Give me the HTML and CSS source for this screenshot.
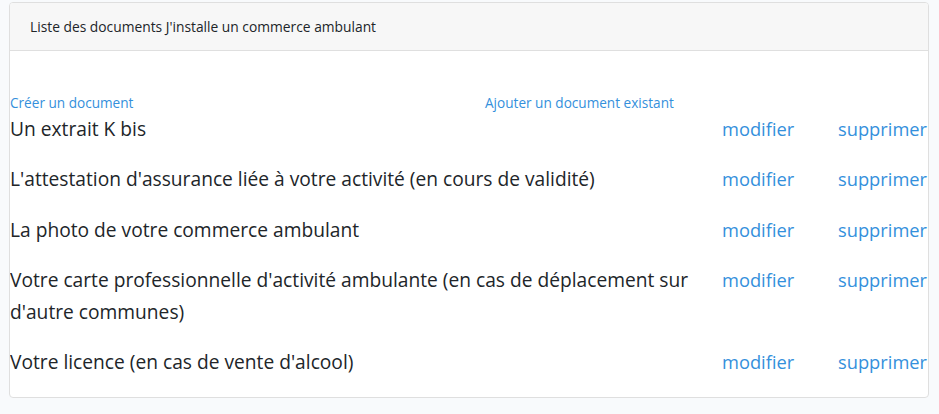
FILE: index.html
```html
<!DOCTYPE html>
<html lang="fr">
<head>
<meta charset="utf-8">
<title>Liste des documents</title>
<link rel="stylesheet" href="styles.css">
</head>
<body>
<div class="card">
  <div class="card-header">Liste des documents J'installe un commerce ambulant</div>
  <div class="card-body">
    <div class="actions">
      <a class="action create" href="#">Créer un document</a>
      <a class="action" href="#">Ajouter un document existant</a>
    </div>
    <div class="doc">
      <div class="doc-name">Un extrait K bis</div>
      <a class="doc-link edit" href="#">modifier</a>
      <a class="doc-link" href="#">supprimer</a>
    </div>
    <div class="doc">
      <div class="doc-name">L'attestation d'assurance liée à votre activité (en cours de validité)</div>
      <a class="doc-link edit" href="#">modifier</a>
      <a class="doc-link" href="#">supprimer</a>
    </div>
    <div class="doc">
      <div class="doc-name">La photo de votre commerce ambulant</div>
      <a class="doc-link edit" href="#">modifier</a>
      <a class="doc-link" href="#">supprimer</a>
    </div>
    <div class="doc">
      <div class="doc-name">Votre carte professionnelle d'activité ambulante (en cas de déplacement sur d'autre communes)</div>
      <a class="doc-link edit" href="#">modifier</a>
      <a class="doc-link" href="#">supprimer</a>
    </div>
    <div class="doc">
      <div class="doc-name">Votre licence (en cas de vente d'alcool)</div>
      <a class="doc-link edit" href="#">modifier</a>
      <a class="doc-link" href="#">supprimer</a>
    </div>
  </div>
</div>
</body>
</html>
```
FILE: styles.css
```css
html, body {
  margin: 0;
  background: #f8fafc;
}
body {
  padding: 2px 10px 0 9px;
  font-family: "Open Sans", "Noto Sans", sans-serif;
  color: #212529;
}
.card {
  background: #fff;
  border: 1px solid #dfdfdf;
  border-radius: 4px;
  height: 396px;
  box-sizing: border-box;
  overflow: hidden;
}
.card-header {
  background: #f7f7f7;
  border-bottom: 1px solid #dfdfdf;
  height: 48px;
  box-sizing: border-box;
  padding: 0 20px;
  display: flex;
  align-items: center;
  font-size: 13.8px;
}
.card-body {
  padding-top: 41px;
}
.actions {
  display: flex;
  height: 20px;
  align-items: center;
  font-size: 13.6px;
}
.action {
  color: #3490dc;
  text-decoration: none;
}
.action.create {
  width: 475px;
}
.doc {
  display: flex;
  align-items: flex-start;
  margin-top: 1px;
  margin-bottom: 18.3px;
  line-height: 32px;
}
.doc-name {
  width: 712px;
  flex: none;
  font-size: 19.2px;
}
.doc-link {
  color: #3490dc;
  text-decoration: none;
  flex: none;
  white-space: nowrap;
  font-size: 18.3px;
}
.doc-link.edit {
  width: 116px;
}
```
